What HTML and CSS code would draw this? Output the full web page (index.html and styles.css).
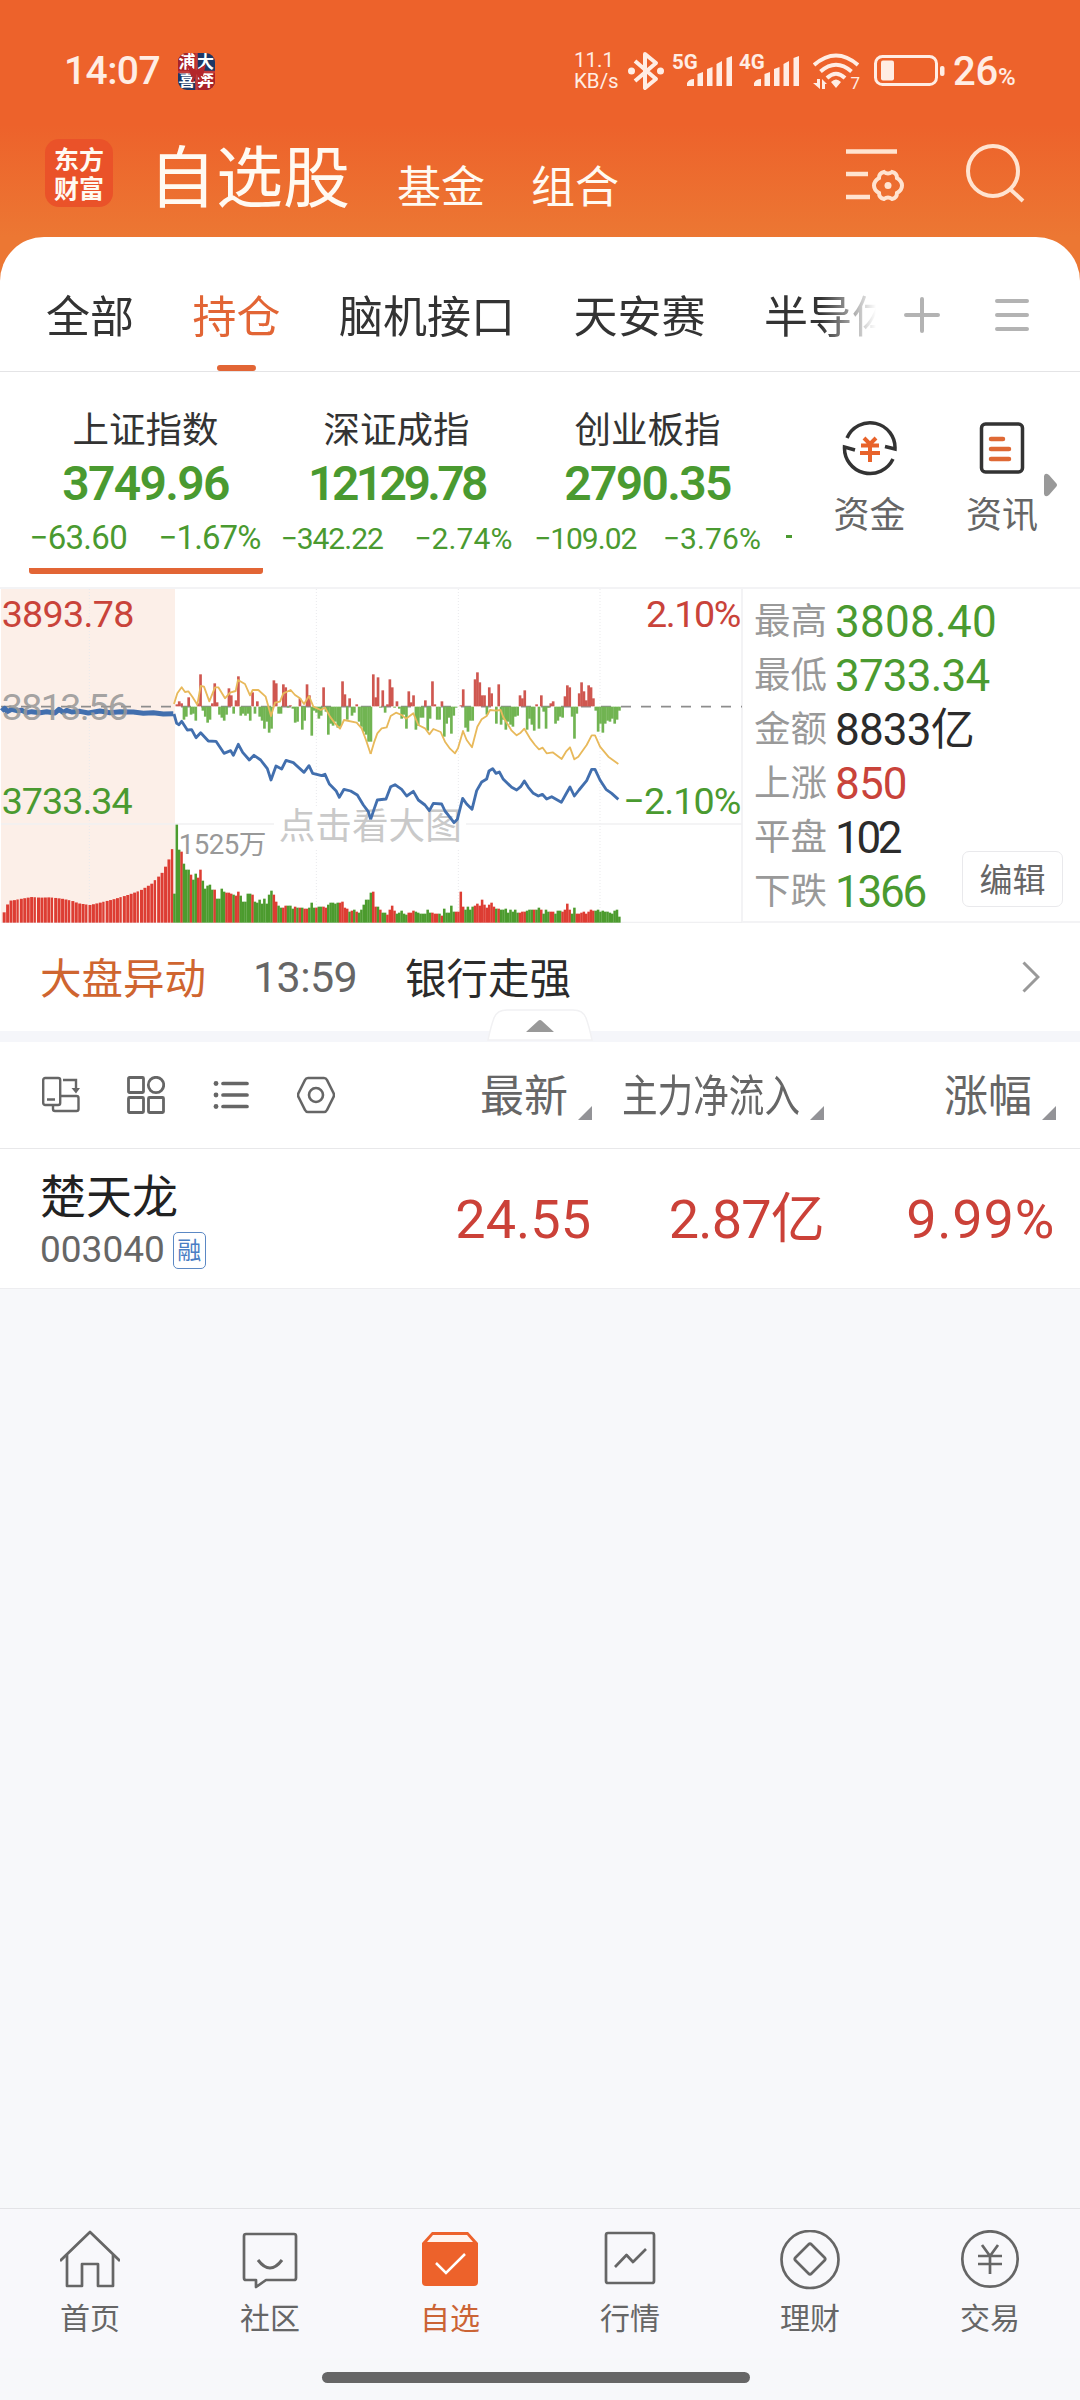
FILE: index.html
```html
<!DOCTYPE html>
<html lang="zh-CN">
<head>
    <meta charset="UTF-8">
    <title>自选股</title>
    <link rel="stylesheet" href="styles.css">
</head>
<body>
<div class="top">
    <div class="status">
        <span class="time">14:07</span>
        <div class="app"><i>浦</i><i>大</i><i>喜</i><i>奔</i><svg viewBox="0 0 37 37"><path d="M0 19H37M18.500 0V37" stroke="#c23a3a" stroke-width="2.500"/><path d="M18 19L11 14L14 22ZM18 19L26 14L24 22ZM18 19L14 29M19 19L24 28" fill="#b3262b" stroke="#b3262b" stroke-width="2.500"/></svg></div>
        <div class="speed"><span>11.1</span><span>KB/s</span></div>
        <svg class="bt" viewBox="0 0 36 40"><path d="M7 10L28 28L17 37V3L28 12L7 30" fill="none" stroke="#ffede4" stroke-width="4" stroke-linejoin="round"/><circle cx="3.500" cy="20" r="3.500" fill="#ffede4"/><circle cx="32.500" cy="20" r="3.500" fill="#ffede4"/></svg>
        <div class="signal"><b>5G</b><svg viewBox="0 0 46 30"><path d="M0 30V27Q2 23 7 23V30ZM10.500 30V18L16 16V30ZM20 30V13L25.500 11V30ZM29.500 30V8L35 5V30ZM39.500 30V2L45 0V30Z" fill="#ffede4"/></svg></div>
        <div class="signal four"><b>4G</b><svg viewBox="0 0 46 30"><path d="M0 30V27Q2 23 7 23V30ZM10.500 30V18L16 16V30ZM20 30V13L25.500 11V30ZM29.500 30V8L35 5V30ZM39.500 30V2L45 0V30Z" fill="#ffede4"/></svg></div>
        <div class="wifi"><svg viewBox="0 0 46 36"><g fill="none" stroke="#ffede4" stroke-width="4"><path d="M1 12Q23 -7 45 12"/><path d="M7.500 18.500Q23 5 38.500 18.500"/><path d="M14 25Q23 16.500 32 25"/></g><path d="M18 29Q23 24 28 29L23 35ZM4 26H7V36L0 30H4ZM9 36V26L14 31H12V36Z" fill="#ffede4"/></svg><small>7</small></div>
        <svg class="battery" viewBox="0 0 72 32"><rect x="1.500" y="1.500" width="61" height="28" rx="7" fill="none" stroke="#ffede4" stroke-width="3"/><rect x="7" y="5.500" width="13" height="20" rx="2" fill="#ffede4"/><rect x="66" y="11" width="4.500" height="10" rx="2" fill="#ffede4"/></svg>
        <span class="power">26<small>%</small></span>
    </div>
    <div class="header">
        <div class="logo"><span>东方</span><span>财富</span></div>
        <h1>自选股</h1>
        <a class="fund">基金</a>
        <a class="group">组合</a>
        <svg class="set" viewBox="0 0 58 52"><path d="M0 2.500H51M0 25H22M0 48H24" stroke="#ffe3d0" stroke-width="4.500"/><path d="M38 23Q42 26 46 23Q51 24 51 29Q56 32 56 36.500Q56 41 51 44Q51 49 46 50Q42 47 38 50Q33 49 33 44Q28 41 28 36.500Q28 32 33 29Q33 24 38 23Z" fill="none" stroke="#ffe3d0" stroke-width="4"/><circle cx="42" cy="36.500" r="3.500" fill="#ffe3d0"/></svg>
        <svg class="search" viewBox="0 0 60 60"><circle cx="27" cy="27" r="25" fill="none" stroke="#ffe3d0" stroke-width="4"/><path d="M44 45L57 57" stroke="#ffe3d0" stroke-width="4"/></svg>
    </div>
</div>

<div class="sheet">
    <div class="tabs">
        <div class="tab-list">
            <a>全部</a>
            <a class="cur">持仓</a>
            <a>脑机接口</a>
            <a>天安赛</a>
            <a>半导体</a>
        </div>
        <svg class="plus" viewBox="0 0 36 36"><path d="M2 18H34M18 2V34" stroke="#b3b3b3" stroke-width="4" stroke-linecap="round"/></svg>
        <svg class="menu" viewBox="0 0 34 34"><path d="M2 3H32M2 17H32M2 31H32" stroke="#b3b3b3" stroke-width="4" stroke-linecap="round"/></svg>
    </div>

    <div class="index">
        <div class="item on">
            <h3>上证指数</h3>
            <strong>3749.96</strong>
            <p><span>−63.60</span><span>−1.67%</span></p>
        </div>
        <div class="item sz">
            <h3>深证成指</h3>
            <strong>12129.78</strong>
            <p><span>−342.22</span><span>−2.74%</span></p>
        </div>
        <div class="item cy">
            <h3>创业板指</h3>
            <strong>2790.35</strong>
            <p><span>−109.02</span><span>−3.76%</span></p>
        </div>
        <i class="next-item"></i>
        <div class="entry">
            <svg viewBox="0 0 56 56"><g fill="none" stroke="#333" stroke-width="3.500"><path d="M5 18A25 25 0 0 1 53 29L43 26.500"/><path d="M51 39A25.500 25.500 0 0 1 2.500 27L13 30"/></g><path d="M22 18L28 24L34 18M19 25.500H37M18 33H38M28 24V42" fill="none" stroke="#e8632b" stroke-width="4"/></svg>
            <span>资金</span>
        </div>
        <div class="entry news-entry">
            <svg viewBox="0 0 56 56"><rect x="7.500" y="4" width="41" height="48" rx="4" fill="none" stroke="#333" stroke-width="3.500"/><path d="M17 19H29M17 29H35M17 39H35" stroke="#df6935" stroke-width="4.500" stroke-linecap="round"/></svg>
            <span>资讯</span>
        </div>
        <svg class="more" viewBox="0 0 13 24"><path d="M0 3Q1 -1 5 2L12 10Q14 12 12 14L5 22Q1 25 0 21Z" fill="#999"/></svg>
    </div>

    <div class="market">
        <div class="chart">
            <!-- one unit is a third of a pixel -->
            <svg class="plot" viewBox="0 21 2226 1008">
                <rect x="3" y="27" width="522" height="1001" fill="#fcefe8"/>
                <path d="M268 27V1028M949 27V1028M1375 27V1028M1800 27V1028" stroke="#e9e9ec" stroke-width="3" stroke-dasharray="3 6"/>
                <path d="M3 732H2226" stroke="#f0f0f2" stroke-width="5"/>
                <path d="M3 1028H2226" stroke="#f0f0f2" stroke-width="5"/>
                <rect x="822" y="680" width="576" height="125" fill="#fff"/>
                <rect x="534" y="737" width="272" height="100" fill="#fff"/>
                <path d="M3 380H2226" stroke="#8d8d8d" stroke-width="5" stroke-dasharray="30 30"/>
                <text class="mark" x="836" y="776">点击看大图</text>
                <text class="vol" x="536" y="822">1525万</text>
                <g id="bars"></g>
                <g class="avg">
                    <polyline points="522,372 532,340 545,322 555,336 565,334 578,352 592,374 602,318 612,320 628,364 645,322 655,322 675,355 690,338 707,333 714,300 735,312 750,346 758,330 775,330 797,350 813,408 825,368 840,365 850,340 872,330 885,345 900,355 912,372 927,348 940,380 962,390 975,383 990,410 1005,430 1020,446 1032,420 1070,428 1085,445 1098,480 1112,522"/>
                    <polyline transform="translate(1110 0)" points="2,522 12,488 22,460 35,445 50,442 62,408 78,398 95,405 108,416 130,400 145,435 165,445 178,463 190,447 212,456 225,485 240,506 255,520 264,505 279,453 290,480 306,502 322,440 335,418 350,408 360,390 378,392 392,390 400,412 425,452 440,466 452,458 463,446 480,475 495,495 507,508 518,503 530,520 548,517 575,537 588,515 600,502 613,538 625,530 650,495 665,466 675,466 690,500 715,530 745,552"/>
                </g>
                <g class="price">
                    <polyline class="auction" points="5,393 14,385 22,395 35,388 50,392 65,391 80,398 95,395 120,398 140,395 165,399 177,388 190,397 200,391 215,396 240,394 265,399 300,393 330,398 360,395 400,396 430,400 460,398 490,402 520,401"/>
                    <polyline points="522,402 530,430 537,434 545,424 562,450 575,449 588,473 602,458 625,483 648,484 672,520 692,512 700,526 715,493 728,517 748,540 762,526 782,540 802,566 813,600 828,558 845,567 858,541 880,548 912,577 927,557 938,580 965,587 975,583 988,612 1008,632 1018,652 1032,628 1052,633 1072,645 1090,675 1105,695 1112,718"/>
                    <polyline transform="translate(1110 0)" points="2,718 12,688 22,660 48,657 62,620 75,614 95,628 110,648 130,634 145,660 165,675 178,692 190,670 215,672 225,693 240,712 252,728 262,718 278,655 290,672 306,688 320,632 335,606 350,597 357,573 368,566 378,580 388,576 400,598 425,622 440,630 452,620 463,603 475,622 490,640 505,648 517,643 530,657 545,650 574,667 588,642 600,621 613,648 627,630 650,602 665,568 675,568 690,600 708,628 725,640 745,658"/>
                </g>
                <text class="mid" x="5" y="419">3813.56</text>
                <text class="red" x="5" y="141" textLength="398">3893.78</text>
                <text class="green" x="5" y="702" textLength="393">3733.34</text>
                <text class="red" x="1938" y="141" textLength="286">2.10%</text>
                <text class="green" x="1870" y="702" textLength="354">−2.10%</text>
            </svg>
        </div>
        <div class="quote">
            <dl>
                <dt>最高</dt><dd class="green high">3808.40</dd>
                <dt>最低</dt><dd class="green">3733.34</dd>
                <dt>金额</dt><dd>8833亿</dd>
                <dt>上涨</dt><dd class="red">850</dd>
                <dt>平盘</dt><dd class="flat">102</dd>
                <dt>下跌</dt><dd class="green fall">1366</dd>
            </dl>
            <a class="edit">编辑</a>
        </div>
    </div>

    <div class="move">
        <b>大盘异动</b>
        <em>13:59</em>
        <span>银行走强</span>
        <svg viewBox="0 0 18 32"><path d="M1.500 1.500L16 16L1.500 30.500" fill="none" stroke="#999" stroke-width="3"/></svg>
    </div>
    <div class="fold">
        <svg viewBox="0 0 106 32"><path d="M1 31Q4 17 7 9Q10 1 20 1H86Q96 1 99 9Q102 17 105 31Z" fill="#fff" stroke="#f1f1f3" stroke-width="1.500"/><path d="M39 23L51 12Q53 10 55 12L67 23Z" fill="#999"/></svg>
    </div>

    <div class="thead">
        <div class="tools">
            <svg viewBox="0 0 38 38"><g fill="none" stroke="#666" stroke-width="2.400"><rect x="1.200" y="2" width="17" height="27" rx="2"/><path d="M5 23.500H13M18 20H34.500Q36.500 20 36.500 22V33Q36.500 35 34.500 35H13Q11 35 11 33V29M21 4H34V14"/></g><path d="M29.500 12H38L34 17.500Z" fill="#666"/></svg>
            <svg viewBox="0 0 38 38"><g fill="none" stroke="#666" stroke-width="2.800"><rect x="1.500" y="1.500" width="15" height="15" rx="1"/><circle cx="29" cy="9" r="7.700"/><rect x="1.500" y="21.500" width="15" height="15" rx="1"/><rect x="21.500" y="21.500" width="15" height="15" rx="1"/></g></svg>
            <svg viewBox="0 0 38 38"><path d="M11 7.500H35M11 19H35M11 30.500H35" stroke="#666" stroke-width="3.700" stroke-linecap="round"/><g fill="#666"><circle cx="4" cy="7.500" r="2.400"/><circle cx="4" cy="19" r="2.400"/><circle cx="4" cy="30.500" r="2.400"/></g></svg>
            <svg viewBox="0 0 38 38"><g fill="none" stroke="#666" stroke-width="2.600"><path d="M11 2H27Q29 2 30 4L36.500 17Q37.500 19 36.500 21L30 34Q29 36 27 36H11Q9 36 8 34L1.500 21Q.5 19 1.500 17L8 4Q9 2 11 2Z"/><circle cx="19" cy="19" r="7"/></g></svg>
        </div>
        <span class="col c1">最新</span>
        <span class="col c2"><u>主力净流入</u></span>
        <span class="col c3">涨幅</span>
    </div>
    <div class="stock">
        <div class="name">
            <h2>楚天龙</h2>
            <p>003040<i>融</i></p>
        </div>
        <span class="v1">24.55</span>
        <span class="v2">2.87亿</span>
        <span class="v3">9.99%</span>
    </div>
</div>

<div class="nav">
    <a>
        <svg viewBox="0 0 60 60"><g fill="none" stroke="#666" stroke-width="2.700" stroke-linejoin="round"><path d="M0 31L30 2L60 31"/><path d="M7 25V56H22V34H38V56H53V25"/></g></svg>
        首页
    </a>
    <a>
        <svg viewBox="0 0 60 60"><g fill="none" stroke="#666" stroke-width="2.700" stroke-linejoin="round"><path d="M6 4H54Q56 4 56 6V48Q56 50 54 50H26L16 57V50H6Q4 50 4 48V6Q4 4 6 4Z"/><path d="M18 30Q30 46 42 30" stroke-width="3"/></g></svg>
        社区
    </a>
    <a class="cur">
        <svg viewBox="0 0 60 60"><path d="M2 13L12 2H48L58 13V52Q58 56 54 56H6Q2 56 2 52Z" fill="#ed622b"/><path d="M13 5H47L53 12H7Z" fill="#fff4ee"/><path d="M16 33L26 43L45 24" fill="none" stroke="#fff" stroke-width="2.500"/></svg>
        自选
    </a>
    <a>
        <svg viewBox="0 0 60 60"><g fill="none" stroke="#666" stroke-width="2.700"><rect x="6" y="3" width="48" height="50" rx="2"/><path d="M15 37L26.500 25L33 32L46 19" stroke-linejoin="round"/></g></svg>
        行情
    </a>
    <a>
        <svg viewBox="0 0 60 60"><g fill="none" stroke="#666" stroke-width="2.700"><circle cx="30" cy="29.500" r="28.500"/><path d="M28.500 14.500Q30 13 31.500 14.500L44.500 27.500Q46 29 44.500 30.500L31.500 43.500Q30 45 28.500 43.500L15.500 30.500Q14 29 15.500 27.500Z"/></g></svg>
        理财
    </a>
    <a>
        <svg viewBox="0 0 60 60"><g fill="none" stroke="#666" stroke-width="2.700"><circle cx="30" cy="29" r="27.700"/><path d="M22 15L30 26L38 15M18 26H42M18 34H42M30 26V44"/></g></svg>
        交易
    </a>
</div>
<div class="home-bar"></div>
<script src="chart.js"></script>
</body>
</html>
```

FILE: styles.css
```css
*{
    margin: 0;
    padding: 0;
    box-sizing: border-box;
}
body{
    width: 1080px;
    height: 2400px;
    overflow: hidden;
    background: #f7f8fa;
    font-family: Roboto, "Noto Sans CJK SC", sans-serif;
    color: #2b2b2b;
    display: flex;
    flex-direction: column;
}
svg{
    display: block;
    flex: none;
}
i,em{
    font-style: normal;
}
.green{
    color: #4a9a30;
    fill: #4a9a30;
}
.red{
    color: #c9433a;
    fill: #c9433a;
}

/* 顶部 */
.top{
    height: 281px;
    flex: none;
    background: linear-gradient(#ed622b 0, #ed622b 125px, #ec7733 237px);
}
.status{
    height: 120px;
    padding: 22px 0 0 64px;
    display: flex;
    align-items: center;
    color: #ffede4;
}
.time{
    width: 114px;
    font-size: 39px;
    font-weight: 500;
    letter-spacing: -.6px;
}
.app{
    width: 37px;
    height: 37px;
    border-radius: 9px;
    overflow: hidden;
    display: grid;
    grid-template-columns: 18px 19px;
    grid-template-rows: 18px 19px;
    position: relative;
    background: #1d3766;
}
.app i{
    font-size: 17px;
    font-weight: bold;
    line-height: 19px;
    text-align: center;
    color: #fff;
}
.app i:nth-child(1),.app i:nth-child(4){
    background: #a82228;
}
.app svg{
    position: absolute;
    left: 0;
    top: 0;
    width: 37px;
}
.speed{
    width: 54px;
    margin-left: 359px;
    font-size: 20.500px;
    line-height: 21px;
}
.speed span{
    display: block;
}
.bt{
    width: 36px;
    margin-right: 8px;
}
.signal{
    width: 60px;
    height: 38px;
    display: flex;
    align-items: flex-end;
    padding-bottom: 4px;
}
.signal b{
    width: 15px;
    font-size: 20.500px;
    line-height: 22px;
    margin-bottom: 13px;
}
.signal svg{
    width: 46px;
}
.four{
    margin: 0 14px 0 7px;
}
.wifi{
    width: 46px;
    position: relative;
}
.wifi small{
    position: absolute;
    right: -1px;
    bottom: -4px;
    font-size: 17px;
    line-height: 20px;
    background: #ed622b;
}
.battery{
    width: 72px;
    margin: 0 7px 0 15px;
}
.power{
    font-size: 40px;
    font-weight: 500;
    letter-spacing: -.3px;
}
.power small{
    font-size: 24px;
}
.header{
    height: 117px;
    display: flex;
    align-items: flex-start;
    padding-left: 45px;
    color: #fffaf2;
}
.logo{
    width: 68px;
    height: 68px;
    margin-top: 19px;
    padding-top: 5px;
    border-radius: 14px;
    background: #ea5229;
    text-align: center;
    font-family: "Noto Sans CJK SC", sans-serif;
    font-weight: bold;
    font-size: 25px;
    line-height: 29px;
}
.logo span{
    display: block;
}
.header h1{
    width: 248px;
    margin-left: 36px;
    font-size: 67px;
    font-weight: normal;
    line-height: 76px;
    margin-top: 21px;
}
.header a{
    width: 134px;
    font-size: 44px;
    line-height: 60px;
    margin-top: 38px;
}
.header .group{
    width: 315px;
}
.set{
    width: 58px;
    margin: 29px 62px 0 0;
}
.search{
    width: 60px;
    margin-top: 24px;
}

/* 内容 */
.sheet{
    margin-top: -44px;
    border-radius: 44px 44px 0 0;
    background: #fff;
    border-bottom: 1px solid #ededf0;
    height: 1052px;
    flex: none;
}
.tabs{
    height: 135px;
    border-bottom: 1px solid #e4e4e6;
    display: flex;
    align-items: center;
    padding: 22px 0 0 46px;
}
.tab-list{
    width: 830px;
    display: flex;
    gap: 58.500px;
    overflow: hidden;
    white-space: nowrap;
    -webkit-mask-image: linear-gradient(90deg, #000 775px, transparent 830px);
}
.tab-list a{
    flex: none;
    height: 112px;
    font-size: 44px;
    line-height: 118px;
    color: #333;
}
.tab-list .cur{
    color: #e26535;
    display: flex;
    flex-direction: column;
    align-items: center;
}
.tab-list .cur:after{
    content: "";
    width: 39px;
    height: 6px;
    flex: none;
    margin-top: -12px;
    border-radius: 3px;
    background: #e26535;
}
.plus{
    width: 36px;
    margin: 0 55px 0 28px;
}
.menu{
    width: 34px;
}
.index{
    height: 215px;
    padding-left: 20px;
    display: flex;
}
.item{
    width: 251px;
    padding-top: 35px;
    display: flex;
    flex-direction: column;
    align-items: center;
    white-space: nowrap;
}
.item h3{
    font-size: 36.500px;
    font-weight: normal;
    line-height: 48px;
    color: #333;
}
.item strong{
    margin-top: 2px;
    font-size: 48px;
    line-height: 54px;
    letter-spacing: -1.700px;
    color: #4a9a30;
    font-weight: 600;
}
.item p{
    width: 232px;
    margin-top: 11px;
    display: flex;
    justify-content: space-between;
    font-size: 30px;
    line-height: 34px;
    color: #4a9a30;
    letter-spacing: -1px;
}
.item span+span{
    letter-spacing: .1px;
}
.on p{
    height: 53px;
    width: 234px;
    margin-top: 10px;
    padding: 0 2px 0 1px;
    font-size: 33px;
    letter-spacing: -.7px;
}
.on p{
    border-bottom: 6px solid #e26535;
    border-radius: 3px;
}
.on span+span{
    letter-spacing: -.9px;
}
.sz strong{
    letter-spacing: -3.600px;
}
.cy p{
    width: 227px;
}
.next-item{
    width: 6px;
    height: 3px;
    margin: 163px 0 0 13px;
    background: #4a9a30;
}
.entry{
    width: 133px;
    margin-left: 11px;
    padding-top: 48px;
    display: flex;
    flex-direction: column;
    align-items: center;
    font-size: 36px;
    line-height: 46px;
    color: #666;
}
.entry svg{
    width: 56px;
    margin-bottom: 17px;
}
.news-entry{
    width: 72px;
    margin-left: 30px;
}
.more{
    width: 13px;
    height: 24px;
    margin: 101px 0 0 6px;
}
.market{
    height: 336px;
    display: flex;
}
.chart{
    width: 743px;
    border-top: 2px solid #f3f3f5;
    border-right: 2px solid #f3f3f5;
}
.plot{
    width: 742px;
    height: 336px;
    margin-top: -2px;
}
.plot text{
    font-size: 113px;
}
.plot .mid{
    fill: #999;
    fill-opacity: .9;
    letter-spacing: -5px;
}
.plot .mark{
    font-size: 110px;
    fill: #c9c9c9;
}
.plot .vol{
    font-size: 83px;
    fill: #999;
    letter-spacing: -1.500px;
}
.avg,.price{
    fill: none;
    stroke: #e8b95b;
    stroke-width: 5.500;
    stroke-linejoin: round;
}
.price{
    stroke: #426fae;
    stroke-width: 8.500;
}
.auction{
    stroke-width: 15;
}
.quote{
    flex: 1;
    border-top: 2px solid #f3f3f5;
    border-bottom: 2px solid #f3f3f5;
    padding: 6px 0 0 11px;
    position: relative;
}
.quote dl{
    display: grid;
    grid-template-columns: 81px auto;
    line-height: 54px;
}
.quote dt{
    font-size: 36.500px;
    color: #999;
}
.quote dd{
    font-size: 44px;
    letter-spacing: -.8px;
}
.quote .high{
    letter-spacing: .3px;
}
.quote .flat{
    letter-spacing: -3.300px;
}
.quote .fall{
    letter-spacing: -2.200px;
}
.edit{
    position: absolute;
    right: 17px;
    bottom: 14px;
    width: 101px;
    height: 56px;
    border: 1px solid #e9e9ec;
    border-radius: 7px;
    background: #fff;
    text-align: center;
    font-size: 33px;
    line-height: 58px;
    color: #666;
}
.move{
    height: 108px;
    padding: 0 40px 0 40px;
    display: flex;
    align-items: center;
    font-size: 41.500px;
}
.move b,.move span{
    margin-top: -2px;
}
.move b{
    width: 213px;
    font-weight: normal;
    color: #cf6530;
}
.move em{
    width: 152px;
    font-size: 43px;
    color: #666;
    letter-spacing: -.6px;
}
.move svg{
    width: 18px;
    margin-left: auto;
}
.fold{
    height: 11px;
    background: #f5f6fa;
    position: relative;
}
.fold svg{
    position: absolute;
    left: 487px;
    top: -22px;
    width: 106px;
}
.thead{
    height: 107px;
    border-bottom: 1px solid #e8e8ea;
    display: flex;
    align-items: center;
    padding: 0 24px 0 42px;
    font-size: 44px;
    color: #666;
}
.tools{
    width: 293px;
    display: flex;
    justify-content: space-between;
}
.tools svg{
    width: 38px;
}
.col{
    display: flex;
    align-items: flex-end;
    justify-content: flex-end;
    line-height: 60px;
    padding-top: 4px;
}
.col:after{
    content: "";
    margin: 0 0 7px 10px;
    border: 7px solid transparent;
    border-right-color: #939397;
    border-bottom-color: #939397;
}
.c1{
    width: 257px;
}
.c2,.c3{
    width: 232px;
}
.c2 u{
    width: 178px;
    text-decoration: none;
    white-space: nowrap;
    transform: scaleX(.809);
    transform-origin: 0 0;
}
.stock{
    height: 139px;
    padding: 3px 0 0 40px;
    display: flex;
    align-items: center;
    font-size: 54px;
    line-height: 64px;
    color: #cb4138;
}
.name{
    width: 320px;
}
.name h2{
    font-size: 46px;
    font-weight: normal;
    line-height: 60px;
    color: #222;
}
.name p{
    display: flex;
    align-items: center;
    font-size: 37px;
    line-height: 46px;
    color: #666;
}
.name i{
    width: 33px;
    height: 37px;
    margin-left: 8px;
    border: 1px solid #5b88c4;
    border-radius: 5px;
    font-size: 24px;
    line-height: 37px;
    text-align: center;
    color: #4a7ec4;
}
.v1,.v2,.v3{
    width: 231px;
    text-align: right;
}
.v2{
    width: 233px;
    letter-spacing: -.8px;
}
.v3{
    letter-spacing: .8px;
}

/* 底部导航 */
.nav{
    height: 150px;
    flex: none;
    margin-top: auto;
    border-top: 1px solid #e3e3e6;
    background: #f8f8fb;
    display: flex;
}
.nav a{
    flex: 1;
    padding-top: 21px;
    display: flex;
    flex-direction: column;
    align-items: center;
    font-size: 30px;
    line-height: 40px;
    color: #666;
}
.nav svg{
    width: 60px;
    margin-bottom: 9px;
}
.nav .cur{
    color: #cb6435;
}
.home-bar{
    width: 428px;
    height: 11px;
    flex: none;
    margin: 14px 0 17px 322px;
    border-radius: 6px;
    background: #666;
}
```

FILE: chart.js
```js
(function(){
    var oBars = document.querySelector('#bars');
    var NS = 'http://www.w3.org/2000/svg';
    // 集合竞价 [x, 顶部y]
    var aPre = [[3,1000],[12,997],[20,978],[28,962],[40,961],[60,957],[95,951],[120,953],[150,952],[185,956],[215,962],[235,970],[270,975],[300,968],[340,958],[380,946],[420,932],[455,911],[485,880],[500,853],[510,830],[518,803]];
    // 成交量，r红 g绿
    var sVol = 'g29 g98 g73 r71 g59 g53 g53 r48 g43 g49 r45 r53 g42 g34 g37 g38 g33 r33 g24 g24 g34 g31 r30 r30 r29 g28 r27 r31 g27 g21 g21 g29 g29 r28 g21 g20 g23 g19 g24 g19 g28 g32 r28 r21 g17 g15 r15 r17 g17 g17 g14 r16 g15 r15 g15 r14 r14 g15 g20 g15 r15 g16 g16 r16 r15 g18 g20 g20 g19 g20 r20 r21 r15 r14 g11 r12 g13 r11 g10 g13 g18 g23 g23 '
        + 'g30 r31 r16 g16 r13 g10 g10 r8 r13 r17 r12 g9 g10 g12 g9 g8 r10 r10 r12 g11 g10 g9 g9 g9 g13 g10 r10 r9 r9 g9 r7 g14 g10 g10 g17 g11 r11 r11 r31 r16 g13 g16 g13 g16 r17 r19 r17 r23 r18 r15 r18 r20 r16 g14 r14 g13 g13 g14 g10 g13 g11 g13 g10 r10 r11 r11 g12 g13 g13 r13 g13 g15 r13 g9 g13 g11 r11 r11 g9 g12 g12 r11 r13 r19 r13 g9 g15 r9 r9 r10 r11 r9 r11 r13 r12 g12 g13 g11 g12 g11 g11 g10 g9 g12 g13 g6';
    // 净流入
    var aNet = [0,2,5,3,-13,-10,9,-8,-7,-14,3,32,-4,-10,-16,-13,3,23,4,-8,-11,-14,-8,18,11,-7,6,30,-9,-7,-9,-7,-14,14,-7,5,-10,-14,-22,-15,-26,-22,26,23,-7,-7,22,19,-1,1,-2,-16,-15,8,-23,-14,22,11,-29,-4,-6,-12,-9,19,-5,-28,-17,-19,-15,-21,-20,25,12,-13,8,-9,-6,2,-15,-20,-25,-28,-35,
        -35,32,9,29,-1,16,-6,2,27,19,-1,5,-2,-12,-8,-22,15,4,11,-23,-19,-11,-11,6,-24,-12,25,2,-13,-13,5,-30,-17,-11,-27,-9,-1,0,1,17,-21,-25,-14,-14,27,34,24,11,11,-8,19,13,0,-17,22,-18,-13,-23,-15,-18,-20,-10,-9,11,8,16,-23,-12,-18,-24,2,-22,11,-5,-22,-1,3,5,-17,-14,-10,-11,10,21,19,-10,-32,-7,13,24,15,6,21,19,8,-4,-25,-17,-26,-17,-14,-15,-12,-17,-13,-4];

    function bar(x, y, w, h, color){
        var oRect = document.createElementNS(NS, 'rect');
        oRect.setAttribute('x', x);
        oRect.setAttribute('y', y);
        oRect.setAttribute('width', w);
        oRect.setAttribute('height', h);
        oRect.setAttribute('fill', color);
        oBars.appendChild(oRect);
    }
    var k = 0;
    for(var i=0;i<50;i++){
        var x = 8 + i*10.3;
        while(k < aPre.length-2 && aPre[k+1][0] < x + 4)k++;
        var a = aPre[k], b = aPre[k+1];
        var y = a[1] + (b[1]-a[1])*(x+4-a[0])/(b[0]-a[0]);
        bar(x, y, i%5 == 4 ? 7 : 9, 1028-y, '#dd3d33');
    }
    var aVol = sVol.split(' ');
    for(i=0;i<aVol.length;i++){
        var h = aVol[i].slice(1)*3;
        bar(519.5 + i*7.1, 1028-h, 7.6, h, aVol[i].charAt(0) == 'r' ? '#dd3d33' : '#4c9b2e');
    }
    for(i=0;i<aNet.length;i++){
        var n = aNet[i]*3;
        if(n > 0){
            bar(519.5 + i*7.1, 379-n, 8, n, '#cf5750');
        }else if(n < 0){
            bar(519.5 + i*7.1, 380, 8, -n, '#71b452');
        }
    }
})();
```
